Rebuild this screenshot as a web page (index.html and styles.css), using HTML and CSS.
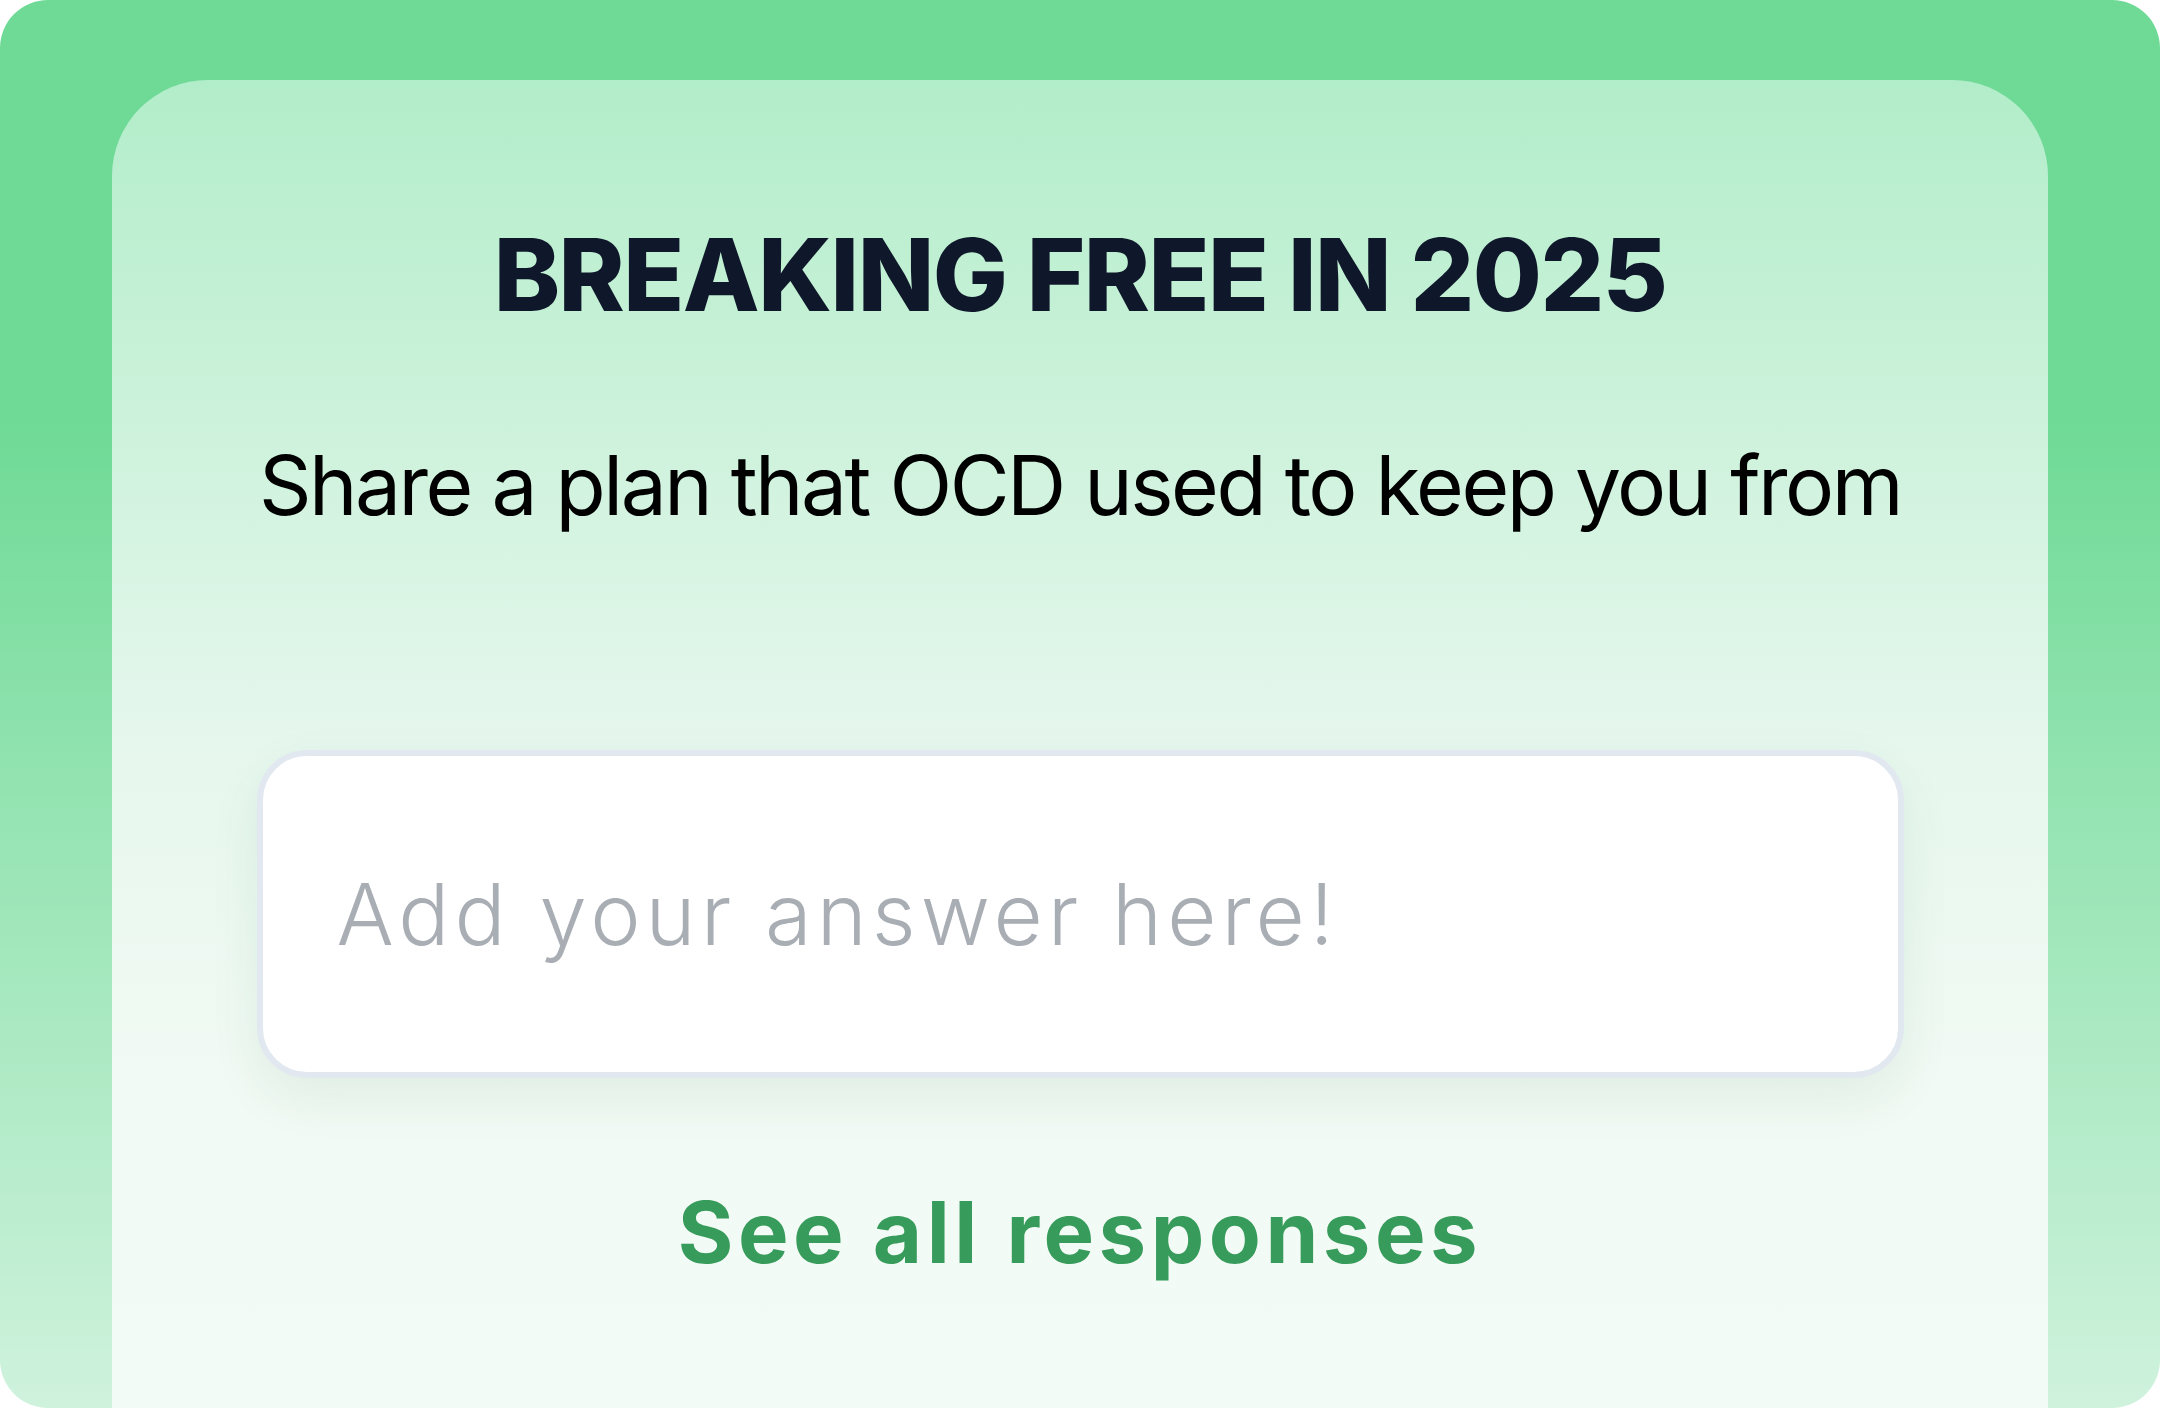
FILE: index.html
```html
<!DOCTYPE html>
<html lang="en">
<head>
<meta charset="utf-8">
<title>Breaking Free in 2025</title>
<link rel="stylesheet" href="styles.css">
</head>
<body>
<div class="frame">
  <main class="card">
    <h1 class="title">BREAKING FREE IN 2025</h1>
    <p class="prompt">Share a plan that OCD used to keep you from</p>
    <input class="answer" type="text" placeholder="Add your answer here!">
    <a class="responses" href="#">See all responses</a>
  </main>
</div>
</body>
</html>
```

FILE: styles.css
```css
* { box-sizing: border-box; }
html, body { margin: 0; padding: 0; background: #ffffff; }
body { width: 2160px; height: 1408px; overflow: hidden; font-family: "Inter", "Noto Sans", sans-serif; }

.frame {
  height: 1408px;
  border-radius: 48px;
  background: linear-gradient(180deg, #6fda96 0%, #6fda96 30%, #cff2dd 100%);
  padding: 80px 112px 0;
  display: flex;
}

.card {
  flex: 1;
  border-radius: 96px 96px 0 0;
  background: linear-gradient(180deg, #b2edc9 0%, #e6f7ed 50%, #f1faf4 75%, #f3fbf6 100%);
  display: flex;
  flex-direction: column;
  align-items: center;
  padding-top: 135px;
}

.title {
  margin: 0;
  font-family: "Inter", sans-serif;
  font-weight: 800;
  font-size: 100px;
  line-height: 1.2;
  color: #0f172a;
  letter-spacing: -1.5px;
}

.prompt {
  margin: 102px 0 0;
  font-family: "Inter", sans-serif;
  font-weight: 400;
  font-size: 82px;
  line-height: 1.2;
  color: #000000;
  letter-spacing: -2.5px;
}

.answer {
  margin-top: 215px;
  width: 1647px;
  height: 328px;
  border: 6px solid #e2e8f0;
  border-radius: 50px;
  background: #ffffff;
  box-shadow: 0 20px 50px rgba(30, 90, 50, 0.08);
  padding: 0 74px;
  font-family: "Inter", sans-serif;
  font-weight: 300;
  font-size: 85px;
  letter-spacing: 5px;
  color: #1f2937;
  outline: none;
}
.answer::placeholder { color: #a9aeb5; opacity: 1; }

.responses {
  margin-top: 104px;
  font-family: "Inter", sans-serif;
  font-weight: 700;
  font-size: 85px;
  line-height: 1.2;
  letter-spacing: 4.5px;
  color: #379b5b;
  text-decoration: none;
}
```
